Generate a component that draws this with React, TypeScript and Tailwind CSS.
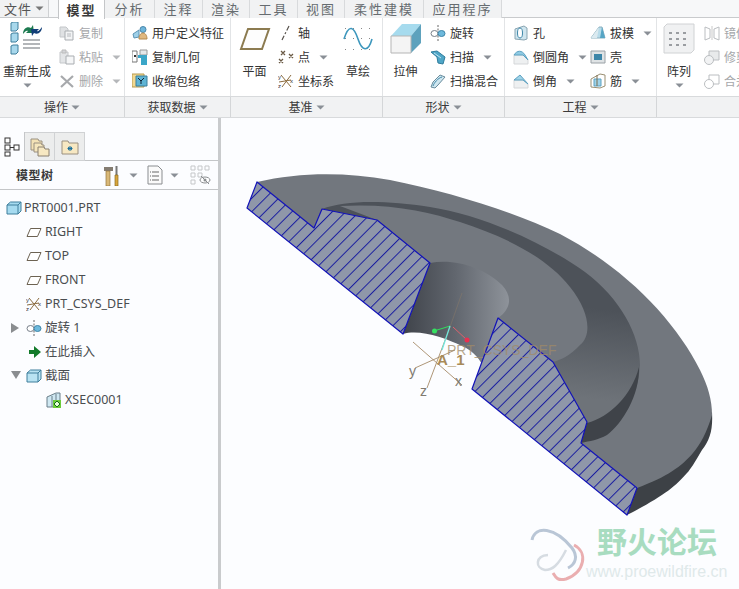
import React from "react";

const cjk = { fontFamily: '"Noto Sans CJK SC", "Noto Sans", sans-serif' };

const Caret = ({ c = "#8a8f96" }: { c?: string }) => (
  <svg width="9" height="5" viewBox="0 0 9 5" className="shrink-0"><path d="M0.5 0.5H8.5L4.5 4.5Z" fill={c} /></svg>
);

type IC = { s?: number; children: React.ReactNode };
const Ic = ({ s = 16, children }: IC) => (
  <svg width={s} height={s} viewBox="0 0 16 16" className="shrink-0">{children}</svg>
);

const CopyI = () => <Ic><path d="M1 2h6l2 2v8H1z" fill="#dfe1e3" stroke="#c4c7ca" /><path d="M6 6h8v9H6z" fill="#f3f4f5" stroke="#a9adb1" /><path d="M8 9h4M8 11h4" stroke="#b5b8bc" /></Ic>;
const PasteI = () => <Ic><path d="M1 3h8v11H1z" fill="#e3e5e7" stroke="#c4c7ca" /><path d="M3 1h4v3H3z" fill="#d3d5d8" stroke="#bbb" /><path d="M7 7h8v8H7z" fill="#f5f6f7" stroke="#a9adb1" /></Ic>;
const DelI = () => <Ic><path d="M2 3l12 11M14 3L2 14" stroke="#a7a9ac" strokeWidth="2.2" /></Ic>;
const UdfI = () => <Ic><path d="M1 9l6-4v7l-5 1z" fill="#9fd0e8" stroke="#5d94b4" /><circle cx="11" cy="4.5" r="3" fill="#6fb6dc" stroke="#4a87ab" /><path d="M7 14c0-4 2-6 4-6s4 2 4 6z" fill="#e0b880" stroke="#b58a50" /></Ic>;
const CopyGeomI = () => <Ic><path d="M0 2h5v11H0z" fill="#fff" stroke="#777" /><path d="M2 6l2 2M4 6L2 8" stroke="#333" /><path d="M8 1h7v5H8z" fill="#e4e8ea" stroke="#999" /><path d="M6 6h9v10H9V9H6z" fill="#3ba6c8" /></Ic>;
const ShrinkI = () => <Ic><path d="M0 1h12v13H0z" fill="#f2d890" stroke="#b59a50" /><path d="M4 3h11v10H4z" fill="#5fb4d4" stroke="#3b7f9c" /><path d="M6 5l3 3 3-3M9 8v3" stroke="#123" fill="none" /></Ic>;
const AxisI = () => <Ic><path d="M11 1L4 15" stroke="#57524c" strokeWidth="1.2" strokeDasharray="5 2 2 2" /></Ic>;
const PointI = () => <Ic><g stroke="#6a5a45" strokeWidth="1.3"><path d="M3 2l4 4M7 2L3 6M11 5l4 4M15 5l-4 4M1 10l4 4M5 10l-4 4" /></g></Ic>;
const CsysI = () => <Ic><path d="M3 2l10 12M13 2L4 14M1 9l12-2" stroke="#8b6c3f" /><text x="0" y="6" fontSize="6" fill="#333" fontFamily="Liberation Sans">y</text><text x="0" y="15" fontSize="6" fill="#333" fontFamily="Liberation Sans">z</text><text x="12" y="10" fontSize="6" fill="#333" fontFamily="Liberation Sans">x</text></Ic>;
const RevolveI = () => <Ic><path d="M8 0v16" stroke="#666" strokeDasharray="2 1.5" /><ellipse cx="4.5" cy="8.5" rx="3.5" ry="3" fill="#fff" stroke="#78808a" /><ellipse cx="11.5" cy="8.5" rx="3.5" ry="3" fill="#6db9dc" stroke="#3e85a8" /></Ic>;
const SweepI = () => <Ic><path d="M1 3l6-1 8 6-2 7-5-1-1-6z" fill="#4fa6c7" stroke="#2f7c9c" /><path d="M4 4l7 5" stroke="#bfe3f0" /></Ic>;
const BlendI = () => <Ic><path d="M1 14l2-5 7-7 5 2-7 8-3 3z" fill="#cfe6ef" stroke="#6a8c9c" /><path d="M3 13c1-3 5-8 9-9" stroke="#3f88aa" fill="none" /></Ic>;
const HoleI = () => <Ic><path d="M2 4l9-3 3 2v11l-3 1-9-1z" fill="#cfe5ee" stroke="#8aa5b2" /><ellipse cx="7" cy="8" rx="2.5" ry="5" fill="#fff" stroke="#3f88aa" /></Ic>;
const RoundI = () => <Ic><path d="M1 6h9l5 5v4H1z" fill="#eef0f1" stroke="#d5d7d9" /><path d="M1 6c3-5 8-5 11 0l3 5-5-5z" fill="#8fcbe4" stroke="#5da1c1" /></Ic>;
const ChamI = () => <Ic><path d="M1 7h9l5 4v4H1z" fill="#eef0f1" stroke="#d5d7d9" /><path d="M1 7l6-5 8 9-5-4z" fill="#9fd3e8" stroke="#5da1c1" /></Ic>;
const DraftI = () => <Ic><path d="M1 13L9 2h3l3 11z" fill="#b8dcea" stroke="#8cb1c0" /><path d="M9 2l-2 11H1z" fill="#dbeaf0" /><path d="M12 2l3 11h-5z" fill="#56a5c5" /></Ic>;
const ShellI = () => <Ic><path d="M1 2h14v12H1z" fill="#dfe3e5" stroke="#9aa1a6" /><path d="M4 5h8v6H4z" fill="#3d86a8" /></Ic>;
const RibI = () => <Ic><path d="M1 6l9-5 5 1v11l-5 2-9-1z" fill="#fff" stroke="#9a8f72" /><path d="M4 6h7v7H4z" fill="#9fd3e8" stroke="#5da1c1" /><path d="M7 2v11" stroke="#7a6f52" /></Ic>;
const MirrorI = () => <Ic><path d="M1 2l5 2v9l-5 2zM15 2l-5 2v9l5 2z" fill="#fff" stroke="#bbbec1" /><path d="M8 1v14" stroke="#c9c9c9" /></Ic>;
const TrimI = () => <Ic><path d="M5 2h10v9H5z" fill="#e8eaeb" stroke="#bbbec1" /><circle cx="5" cy="11" r="4.5" fill="#f2f3f4" stroke="#bbbec1" /></Ic>;
const MergeI = () => <Ic><path d="M5 2h10v9H5z" fill="#fff" stroke="#bbbec1" /><circle cx="5" cy="11" r="4.5" fill="#fff" stroke="#bbbec1" /></Ic>;

const Regen = () => (
  <svg width="34" height="34" viewBox="0 0 34 34">
    {[1, 12, 24].map((y) => (<path key={y} d={`M1 ${y}l2-1h5v7l-2 2H1z`} fill="#a8d8ec" stroke="#3f7f9c" />))}
    <path d="M13 12c0-5 4-8 8-6l2-3 1 8-8 0 2-2c-2-1-3 1-5 3z" fill="#1c7a50" />
    <path d="M33 5c0 5-4 8-8 6l-2 3-1-7 8 0-2 2c2 1 3-2 5-4z" fill="#123f78" transform="translate(-1 0)" />
    <path d="M13 18h17M13 22h17M13 26h17" stroke="#9a9ea2" strokeWidth="1.6" />
  </svg>
);
const Plane = () => (
  <svg width="32" height="24" viewBox="0 0 32 24"><path d="M9 2h21L23 22H2z" fill="#fdfdfd" stroke="#8c7b50" strokeWidth="2" /></svg>
);
const Sketch = () => (
  <svg width="30" height="28" viewBox="0 0 30 28">
    <g fill="#888">{[2, 10, 18, 26].flatMap((x) => [3, 13, 24].map((y) => <rect key={`${x}-${y}`} x={x} y={y} width="1" height="1" />))}</g>
    <path d="M1 14C6 -2 11 2 15 14s10 14 14 0" stroke="#3d97bd" strokeWidth="1.6" fill="none" />
  </svg>
);
const Extrude = () => (
  <svg width="32" height="32" viewBox="0 0 32 32">
    <path d="M1 13L12 1h19L21 13z" fill="#a6dbee" /><path d="M21 13L31 1v19L21 30z" fill="#5ea2bd" />
    <path d="M1 13h20v17H1z" fill="#f4f4f4" stroke="#b5b5b5" />
  </svg>
);
const Pattern = () => (
  <svg width="32" height="32" viewBox="0 0 32 32">
    <path d="M1 4L4 1h27v26l-3 3H1z" fill="#f0f1f2" stroke="#d0d2d4" />
    <g fill="#9a9da1">{[6, 13, 20].flatMap((x) => [9, 15, 21].map((y) => <rect key={`${x}-${y}`} x={x} y={y} width="3" height="2" />))}</g>
  </svg>
);

const Row = ({ icon, text, caret, gray }: { icon: React.ReactNode; text: string; caret?: boolean; gray?: boolean }) => (
  <div className="h-6 flex items-center gap-[4px] whitespace-nowrap">
    {icon}
    <span className={gray ? "text-[#a5a7aa]" : "text-[#333]"}>{text}</span>
    {caret && <span className="ml-[5px]"><Caret c={gray ? "#b5b7ba" : "#8a8f96"} /></span>}
  </div>
);

const Big = ({ icon, text, w, caret }: { icon: React.ReactNode; text: string; w: string; caret?: boolean }) => (
  <div className={`flex flex-col items-center shrink-0 ${w}`}>
    <div className="h-[36px] flex items-center justify-center mt-[3px]">{icon}</div>
    <div className="h-5 leading-5 mt-[4px] text-[#333] whitespace-nowrap">{text}</div>
    {caret && <div className="mt-[2px]"><Caret /></div>}
  </div>
);

const Tab = ({ t, w, active }: { t: string; w: string; active?: boolean }) => (
  <div className={`${w} shrink-0 flex items-center justify-center pb-px text-[13px] tracking-[2px] border-r ${active ? "bg-white border-l border-[#c4c6c8] font-bold text-[#3a3a3a] h-[19px] self-start z-10" : "h-[18px] border-[#d8dadc] text-[#666c70] bg-[#f1f2f3]"}`}>{t}</div>
);

const Lbl = ({ t, w }: { t: string; w: string }) => (
  <div className={`${w} shrink-0 flex items-center justify-center gap-[3px] border-r border-[#d4d6d8] text-[#3a3a3a]`}>{t}<Caret /></div>
);

const TreeRow = ({ pad, icon, text, gap = "gap-[4px]", tri }: { pad: string; icon: React.ReactNode; text: string; gap?: string; tri?: React.ReactNode }) => (
  <div className={`relative h-6 flex items-center ${pad} ${gap} whitespace-nowrap text-[#4a4d50] text-[12.5px]`}>
    {tri && <span className="absolute left-[11px] top-[7px]">{tri}</span>}
    {icon}<span>{text}</span>
  </div>
);

const PlaneSm = () => <Ic><path d="M4.5 4.5H15L11.5 12.5H1z" fill="#fff" stroke="#6c6252" /></Ic>;
const Cube = ({ c = "#a6dbf0" }: { c?: string }) => (
  <Ic><path d="M1 5L4.5 2H15v9l-3 3H1z" fill={c} stroke="#3f7f9c" /><path d="M1 5h11v9M12 5l3-3" stroke="#3f7f9c" fill="none" /></Ic>
);

export default function App() {
  const holeId = "hatch";
  return (
    <div className="w-[739px] h-[589px] overflow-hidden bg-[#fcfdff] text-[12px] leading-none" style={cjk}>
      <div className="h-[18px] flex border-b border-[#c9cbcd] bg-[#f7f8f9]">
        <div className="w-[49px] h-[17px] flex items-center justify-center gap-[3px] pb-px bg-[#f1f2f3] border-r border-[#cfd1d3] text-[#555] text-[13px] tracking-[1px]">文件<Caret c="#777" /></div>
        <div className="w-[9px]" />
        <Tab t="模型" w="w-[47px]" active />
        <Tab t="分析" w="w-[50px]" />
        <Tab t="注释" w="w-[48px]" />
        <Tab t="渲染" w="w-[47px]" />
        <Tab t="工具" w="w-[48px]" />
        <Tab t="视图" w="w-[47px]" />
        <Tab t="柔性建模" w="w-[79px]" />
        <Tab t="应用程序" w="w-[78px]" />
      </div>

      <div className="h-[78px] flex bg-white overflow-hidden">
        <div className="w-[125px] shrink-0 flex border-r border-[#e2e4e6]">
          <Big w="w-[52px] ml-px" icon={<Regen />} text="重新生成" caret />
          <div className="ml-[6px] pt-[3px]">
            <Row icon={<CopyI />} text="复制" gray />
            <Row icon={<PasteI />} text="粘贴" gray caret />
            <Row icon={<DelI />} text="删除" gray caret />
          </div>
        </div>
        <div className="w-[106px] shrink-0 pl-[7px] pt-[3px] border-r border-[#e2e4e6]">
          <Row icon={<UdfI />} text="用户定义特征" />
          <Row icon={<CopyGeomI />} text="复制几何" />
          <Row icon={<ShrinkI />} text="收缩包络" />
        </div>
        <div className="w-[152px] shrink-0 flex border-r border-[#e2e4e6]">
          <Big w="w-[47px]" icon={<Plane />} text="平面" />
          <div className="pt-[3px]">
            <Row icon={<AxisI />} text="轴" />
            <Row icon={<PointI />} text="点" caret />
            <Row icon={<CsysI />} text="坐标系" />
          </div>
          <Big w="w-[40px] ml-[4px]" icon={<Sketch />} text="草绘" />
        </div>
        <div className="w-[122px] shrink-0 flex border-r border-[#e2e4e6]">
          <Big w="w-[45px]" icon={<Extrude />} text="拉伸" />
          <div className="pt-[3px] pl-[2px]">
            <Row icon={<RevolveI />} text="旋转" />
            <Row icon={<SweepI />} text="扫描" caret />
            <Row icon={<BlendI />} text="扫描混合" />
          </div>
        </div>
        <div className="w-[152px] shrink-0 flex border-r border-[#e2e4e6] pl-[8px] pt-[3px]">
          <div className="w-[77px]">
            <Row icon={<HoleI />} text="孔" />
            <Row icon={<RoundI />} text="倒圆角" caret />
            <Row icon={<ChamI />} text="倒角" caret />
          </div>
          <div>
            <Row icon={<DraftI />} text="拔模" caret />
            <Row icon={<ShellI />} text="壳" />
            <Row icon={<RibI />} text="筋" caret />
          </div>
        </div>
        <div className="flex-1 flex overflow-hidden">
          <Big w="w-[44px]" icon={<Pattern />} text="阵列" caret />
          <div className="pt-[3px] ml-[3px]">
            <Row icon={<MirrorI />} text="镜像" gray />
            <Row icon={<TrimI />} text="修剪" gray />
            <Row icon={<MergeI />} text="合并" gray />
          </div>
        </div>
      </div>

      <div className="h-[22px] flex bg-[#f1f2f3] border-y border-[#d8dadc]">
        <Lbl t="操作" w="w-[125px]" />
        <Lbl t="获取数据" w="w-[106px]" />
        <Lbl t="基准" w="w-[152px]" />
        <Lbl t="形状" w="w-[122px]" />
        <Lbl t="工程" w="w-[152px]" />
      </div>

      <div className="h-[471px] flex">
        <div className="w-[221px] shrink-0 pt-[14px] border-r-[3px] border-[#c9cbcd] bg-[#fcfdff]">
          <div className="h-[29px] flex">
            <div className="w-[25px] border-r border-[#c4c6c8] flex items-center justify-center">
              <svg width="16" height="20" viewBox="0 0 16 20"><g fill="#fff" stroke="#333"><rect x="1" y="1" width="5" height="5" /><rect x="1" y="8" width="5" height="5" /><rect x="1" y="15" width="5" height="4" /><rect x="10" y="8" width="5" height="5" /></g><path d="M6 10.5h4" stroke="#333" /></svg>
            </div>
            <div className="w-[30px] bg-[#eceded] border-r border-t border-b border-[#d0d2d4] flex items-center justify-center">
              <svg width="20" height="20" viewBox="0 0 20 20"><path d="M1 2h7l1 2h3v9H1z" fill="#f3e2b6" stroke="#9a9080" /><path d="M4 6h7l1 2h2v7H4z" fill="#f5e6bd" stroke="#9a9080" /><path d="M8 10h6l1 2h4v7H8z" fill="#f7e8c2" stroke="#8a8070" /></svg>
            </div>
            <div className="w-[30px] bg-[#eceded] border-r border-t border-b border-[#d0d2d4] flex items-center justify-center">
              <svg width="18" height="16" viewBox="0 0 18 16"><path d="M1 2h6l1 2h9v11H1z" fill="#f7e8c2" stroke="#9a9080" /><path d="M9 7v5M6.5 9.5h5M7 8l4 3M11 8l-4 3" stroke="#1a6f9a" /></svg>
            </div>
            <div className="flex-1 border-b border-[#c4c6c8]" />
          </div>
          <div className="h-[29px] flex items-center border-b border-[#c4c6c8]">
            <span className="ml-[16px] font-bold text-[#3a3a3a] tracking-[0.5px]">模型树</span>
            <span className="ml-[49px]">
              <svg width="18" height="21" viewBox="0 0 18 21" className="block"><path d="M1 2h9v4H1z" fill="#857d72" /><path d="M3 6h4v15H3z" fill="#d9b877" stroke="#93743c" strokeWidth="0.7" /><path d="M13.5 1v9" stroke="#777" strokeWidth="2" /><path d="M12 10h3v11h-3z" fill="#d9a63c" stroke="#8a6a20" strokeWidth="0.7" /></svg>
            </span>
            <span className="ml-[8px]"><Caret /></span>
            <span className="ml-[9px]">
              <svg width="16" height="20" viewBox="0 0 16 20" className="block"><path d="M1 1h10l4 4v14H1z" fill="#fafafa" stroke="#8a8d90" /><path d="M5 7h7M5 11h7M5 15h7M3 7h1M3 11h1M3 15h1" stroke="#666" /></svg>
            </span>
            <span className="ml-[7px]"><Caret /></span>
            <span className="ml-[11px]">
              <svg width="22" height="20" viewBox="0 0 22 20" className="block"><g fill="none" stroke="#c5c7c9"><path d="M1 1h4v4H1zM1 8h4v4H1zM1 15h4v4H1zM8 1h4v4H8zM8 8h4v4H8zM15 1h4v4h-4z" /></g><ellipse cx="15" cy="15" rx="5" ry="3" fill="#fff" stroke="#8a8d90" /><circle cx="15" cy="15" r="1.5" fill="#8a8d90" /><path d="M11 11l8 8" stroke="#8a8d90" /></svg>
            </span>
          </div>
          <div className="pt-[6px]" style={{ fontFamily: '"Noto Sans", "Noto Sans CJK SC", sans-serif' }}>
            <TreeRow pad="pl-[6px]" icon={<Cube />} text="PRT0001.PRT" gap="gap-[2px]" />
            <TreeRow pad="pl-[26px]" icon={<PlaneSm />} text="RIGHT" gap="gap-[3px]" />
            <TreeRow pad="pl-[26px]" icon={<PlaneSm />} text="TOP" gap="gap-[3px]" />
            <TreeRow pad="pl-[26px]" icon={<PlaneSm />} text="FRONT" gap="gap-[3px]" />
            <TreeRow pad="pl-[26px]" icon={<CsysI />} text="PRT_CSYS_DEF" gap="gap-[3px]" />
            <TreeRow pad="pl-[26px]" icon={<RevolveI />} text="旋转 1" gap="gap-[3px]" tri={<svg width="8" height="10" viewBox="0 0 8 10" className="block"><path d="M0 0l8 5-8 5z" fill="#8a8d90" /></svg>} />
            <TreeRow pad="pl-[26px]" icon={<Ic><path d="M3 6h5V2l7 6-7 6v-4H3z" fill="#137a2a" /></Ic>} text="在此插入" gap="gap-[3px]" />
            <TreeRow pad="pl-[26px]" icon={<Cube c="#b9e3f2" />} text="截面" gap="gap-[3px]" tri={<svg width="10" height="8" viewBox="0 0 10 8" className="block"><path d="M0 0h10l-5 8z" fill="#8a8d90" /></svg>} />
            <TreeRow pad="pl-[46px]" icon={<Ic><path d="M1 5l9-4h4v12l-6 2H1z" fill="#cfe8f2" stroke="#6a7f8a" /><path d="M6 4v11M10 2v12" stroke="#6a7f8a" /><rect x="7" y="8" width="8" height="8" fill="#6ccc3a" /><path d="M11 9l3 3-3 3-3-3z" fill="#e8ffd8" stroke="#136a1a" /></Ic>} text="XSEC0001" gap="gap-[3px]" />
          </div>
        </div>

        <div className="flex-1 min-w-0">
          <svg width="518" height="471" viewBox="221 118 518 471" className="block">
            <defs>
              <pattern id={holeId} width="9.5" height="9.5" patternUnits="userSpaceOnUse" patternTransform="rotate(-45 250 200)">
                <rect width="9.5" height="9.5" fill="#8f97a9" />
                <rect width="9.5" height="1" fill="#1a1ea0" />
              </pattern>
              <linearGradient id="hole" x1="0" x2="1" y1="0" y2="0">
                <stop offset="0" stopColor="#3f434a" />
                <stop offset="0.5" stopColor="#62676f" />
                <stop offset="1" stopColor="#8e939a" />
              </linearGradient>
              <linearGradient id="wall" gradientUnits="userSpaceOnUse" x1="610" y1="310" x2="600" y2="400">
                <stop offset="0" stopColor="#4d5259" />
                <stop offset="1" stopColor="#6e7379" />
              </linearGradient>
            </defs>

            <path d="M637 488L712 412C713 430 710 440 702 450C695 462 690 470 687 473C675 487 662 497 627 515Z" fill="#3d4146" />
            <path d="M257 182C300 172 345 172 390 180C450 192 515 212 560 234C625 268 675 320 700 370C708 386 712 400 712 415C707 432 700 445 693 453C682 466 667 477 637 488L581 443L314 228Z" fill="#72777e" />
            <path d="M322 209C345 200 385 200 430 207C480 215 540 240 585 272C620 298 640 335 640 365C639 395 622 418 598 432C590 437 586 440 581 443L587 422L377 220Z" fill="url(#wall)" />
            <path d="M587 423C610 417 632 395 639 367C640 395 622 424 607 435C598 440 590 441 581 443Z" fill="#3f4349" />
            <path d="M340 206C390 203 430 212 460 222C500 235 545 255 570 287C590 312 592 335 580 345C570 356 560 360 553 362L430 263L377 220Z" fill="#73787f" />
            <path d="M430 263C455 258 485 268 502 285C512 296 512 308 498 318L472 389L403 334Z" fill="url(#hole)" />
            <path d="M403 334C420 329 445 338 462 346C475 352 480 360 484 368L472 389L440 400L400 345Z" fill="#fcfdff" />

            <path d="M257 182L247 208L403 334L430 263L377 220L322 209L314 228Z" fill={`url(#${holeId})`} stroke="#1212b8" strokeWidth="1.2" strokeLinejoin="round" />
            <path d="M498 318L472 389L627 515L637 488L581 443L587 422L553 362Z" fill={`url(#${holeId})`} stroke="#1212b8" strokeWidth="1.2" strokeLinejoin="round" />

            <path d="M413 342L462 385M415 368L455 350M427 388L450 327" stroke="#a58a68" strokeWidth="0.9" fill="none" />
            <path d="M462 293L450 327" stroke="#8a7a68" strokeWidth="0.7" fill="none" strokeOpacity="0.7" />
            <path d="M434 331L450 326" stroke="#2fe05c" strokeWidth="1" />
            <path d="M453 327L467 340" stroke="#e0606c" strokeWidth="1" />
            <path d="M450 326L442 350" stroke="#6ce8e0" strokeWidth="1.2" />
            <circle cx="434.5" cy="331" r="2.5" fill="#35e060" />
            <circle cx="467" cy="340" r="2.5" fill="#e83050" />
            <g style={{ fontFamily: '"Liberation Sans", sans-serif' }}>
              <text x="447" y="355" fontSize="14" fill="#a08a68" fillOpacity="0.75">PRT_CSYS_DEF</text>
              <text x="437" y="365" fontSize="15" fontWeight="700" fill="#a88a58">A_1</text>
              <text x="409" y="376" fontSize="14" fill="#807a70">y</text>
              <text x="420" y="396" fontSize="14" fill="#807a70">z</text>
              <text x="455" y="386" fontSize="14" fill="#807a70">x</text>
            </g>

            <path d="M532 540C535 525 555 527 572 548C578 556 576 564 568 568" stroke="#b9c6d6" strokeWidth="3" fill="none" />
            <path d="M574 545C588 552 585 572 566 579C558 581 556 578 553 573" stroke="#eaaeb0" strokeWidth="3" fill="none" />
            <path d="M548 555C535 556 535 568 545 570C552 570 558 566 566 550" stroke="#d6dce2" strokeWidth="2.5" fill="none" />
            <text x="597" y="553" fontSize="30" fontWeight="700" fill="#a8dcc0" style={cjk}>野火论坛</text>
            <text x="586" y="577" fontSize="16" fill="#dfe9ea" style={{ fontFamily: '"Liberation Sans", sans-serif' }}>www.proewildfire.cn</text>
          </svg>
        </div>
      </div>
    </div>
  );
}
